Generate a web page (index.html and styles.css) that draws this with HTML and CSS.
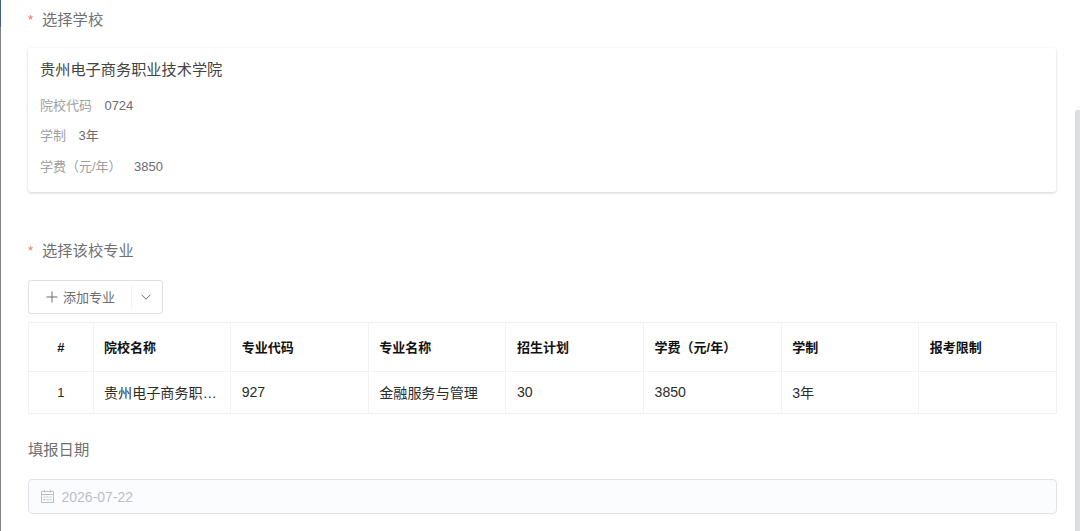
FILE: index.html
```
<!DOCTYPE html>
<html lang="zh-CN">
<head>
    <meta charset="UTF-8">
    <meta name="viewport" content="width=device-width, initial-scale=1.0">
    <title>志愿填报</title>
    <link rel="stylesheet" href="styles.css">
</head>
<body>
<div class="page">
    <div class="edge"></div>
    <div class="form">
        <div class="label required first">选择学校</div>
        <div class="card">
            <div class="card-title">贵州电子商务职业技术学院</div>
            <div class="info"><span class="info-name">院校代码</span><span>0724</span></div>
            <div class="info"><span class="info-name">学制</span><span>3年</span></div>
            <div class="info"><span class="info-name">学费（元/年）</span><span>3850</span></div>
        </div>

        <div class="label required second">选择该校专业</div>
        <div class="btn">
            <div class="btn-main">
                <svg width="12" height="12" viewBox="0 0 12 12"><path d="M6 0.5V11.5M0.5 6H11.5"/></svg>
                <span>添加专业</span>
            </div>
            <div class="btn-more">
                <svg width="12" height="12" viewBox="0 0 12 12"><path d="M1.5 3.7L6 8.2L10.5 3.7"/></svg>
            </div>
        </div>

        <table class="table">
            <thead>
                <tr>
                    <th class="num">#</th>
                    <th>院校名称</th>
                    <th>专业代码</th>
                    <th>专业名称</th>
                    <th>招生计划</th>
                    <th>学费（元/年）</th>
                    <th>学制</th>
                    <th>报考限制</th>
                </tr>
            </thead>
            <tbody>
                <tr>
                    <td class="num">1</td>
                    <td>贵州电子商务职…</td>
                    <td>927</td>
                    <td>金融服务与管理</td>
                    <td>30</td>
                    <td>3850</td>
                    <td>3年</td>
                    <td></td>
                </tr>
            </tbody>
        </table>

        <div class="label third">填报日期</div>
        <div class="date">
            <svg width="13" height="13" viewBox="0 0 13 13"><path d="M0.5 1.5H12.5V12.5H0.5ZM0.5 4.5H12.5M3.5 0V2.5M9.5 0V2.5M2.5 7H4.5M5.5 7H7.5M8.5 7H10.5M2.5 9.8H4.5M5.5 9.8H7.5M8.5 9.8H10.5"/></svg>
            <span>2026-07-22</span>
        </div>
    </div>
    <div class="scrollbar"><div class="thumb"></div></div>
</div>
</body>
</html>
```
FILE: styles.css
```
* {
    box-sizing: border-box;
    margin: 0;
    padding: 0;
}
body {
    background: #fff;
    font-family: "Liberation Sans", "Noto Sans CJK SC", sans-serif;
    font-size: 13px;
    color: #6c6d70;
    overflow: hidden;
}
svg {
    display: block;
    fill: none;
    stroke: currentColor;
}
.page {
    display: flex;
    height: 531px;
}
.edge {
    width: 1px;
    background: linear-gradient(#3f5f88 27px, #828282 27px);
}
.form {
    flex: 1;
    min-width: 0;
    padding: 0 18px 0 27px;
}
.label {
    height: 24px;
    line-height: 24px;
    font-size: 15.3px;
    color: #707070;
}
.required::before {
    content: '*';
    display: inline-block;
    width: 14px;
    font-size: 13px;
    line-height: 20px;
    vertical-align: 1px;
    color: #f56c6c;
}
.first {
    margin-top: 8px;
}
.second {
    margin-top: 47px;
}
.third {
    margin-top: 24px;
}
.card {
    height: 144px;
    margin-top: 16px;
    margin-right: 1px;
    padding: 10px 12px;
    border-radius: 3px;
    box-shadow: 0 1px 3px rgba(0,0,0,0.18);
}
.card-title {
    height: 24px;
    line-height: 24px;
    margin-bottom: 9px;
    font-size: 15.2px;
    color: #444;
}
.info {
    display: flex;
    gap: 12.4px;
    height: 30.3px;
    line-height: 30px;
}
.info-name {
    color: #a0a0a0;
}
.btn {
    display: flex;
    align-items: center;
    width: 135px;
    height: 34px;
    margin-top: 17px;
    border: 1px solid #dfe1e5;
    border-radius: 3px;
}
.btn-main {
    display: flex;
    align-items: center;
    gap: 5px;
    width: 102px;
    padding-left: 17px;
}
.btn-main span {
    padding-bottom: 2px;
}
.btn-more {
    display: flex;
    flex: 1;
    align-items: center;
    justify-content: center;
    height: 22px;
    padding-right: 2px;
    border-left: 1px solid #f2f3f5;
}
.table {
    width: 1029px;
    margin-top: 8px;
    table-layout: fixed;
    border-collapse: collapse;
    color: #2c2c2c;
}
.table th,
.table td {
    padding: 0 8px 0 10.5px;
    border: 1px solid #eff1f4;
    text-align: left;
    white-space: nowrap;
}
.table th {
    height: 49px;
    padding-bottom: 1px;
    font-size: 13px;
    color: #111;
}
.table td {
    height: 42px;
    padding-bottom: 1px;
    font-size: 14.1px;
}
.table .num {
    width: 64.5px;
    padding: 0;
    font-size: 13px;
    text-align: center;
}
.date {
    display: flex;
    align-items: center;
    gap: 8px;
    height: 35px;
    margin-top: 17px;
    padding-left: 11.5px;
    border: 1px solid #dfe2e6;
    border-radius: 4px;
    background: #fafcfe;
    font-size: 14px;
    color: #bcc0c6;
}
.scrollbar {
    width: 5px;
    padding-top: 110px;
}
.thumb {
    height: 421px;
    border-radius: 2px 0 0 0;
    background: #dddedf;
}
```
